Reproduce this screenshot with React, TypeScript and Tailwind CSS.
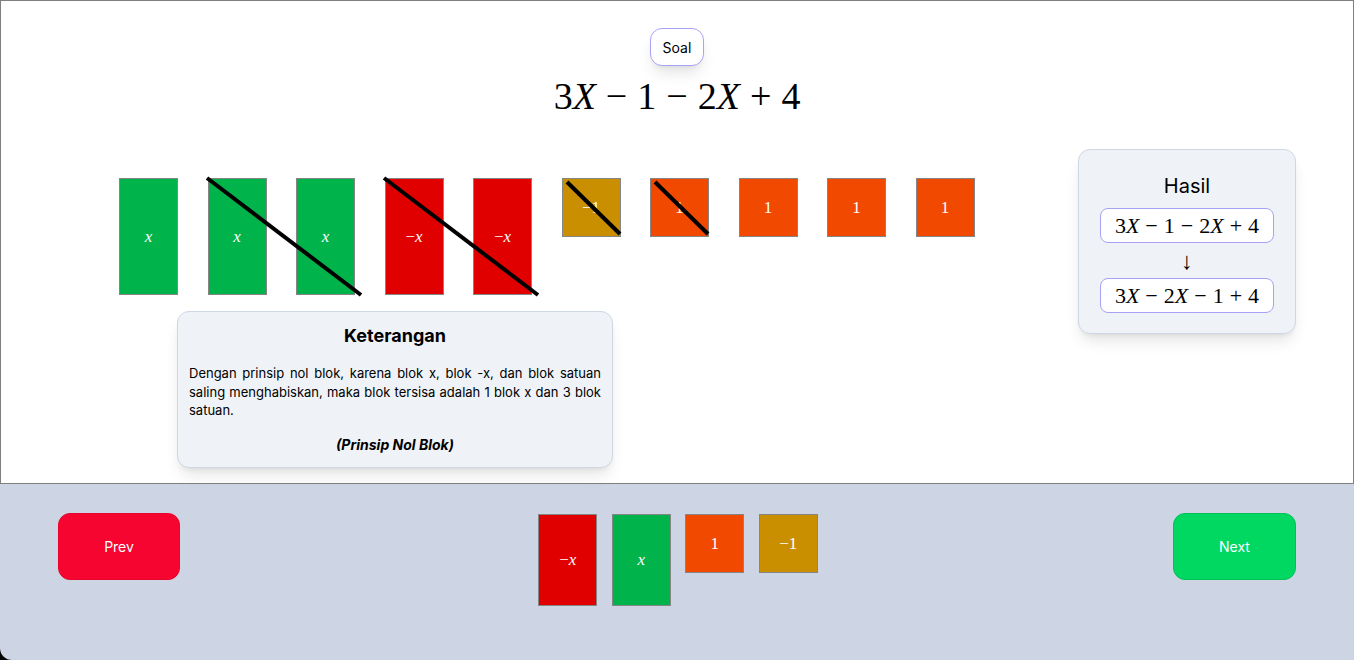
const mathFont = { fontFamily: '"Liberation Serif", "DejaVu Serif", serif' };

type BlockKind = "x" | "-x" | "1" | "-1";

const blockColor: Record<BlockKind, string> = {
  x: "bg-[#00b34b]",
  "-x": "bg-[#e10000]",
  "1": "bg-[#f14a00]",
  "-1": "bg-[#c98f00]",
};

function Label({ kind }: { kind: BlockKind }) {
  if (kind === "x") return <i>x</i>;
  if (kind === "-x")
    return (
      <span>
        −<i>x</i>
      </span>
    );
  if (kind === "-1") return <span>−1</span>;
  return <span>1</span>;
}

function Block({ kind, tall = 117 }: { kind: BlockKind; tall?: number }) {
  const isVar = kind === "x" || kind === "-x";
  return (
    <div
      style={{ ...mathFont, height: isVar ? tall : 59 }}
      className={`flex w-[59px] shrink-0 items-center justify-center border border-[#858585] text-[17px] text-white ${blockColor[kind]}`}
    >
      <Label kind={kind} />
    </div>
  );
}

function Expr({ parts, gap }: { parts: string[]; gap: string }) {
  // parts: alternating terms and operators
  return (
    <span style={mathFont} className="inline-flex items-baseline whitespace-nowrap">
      {parts.map((p, i) => {
        if (p === "−" || p === "+") {
          return (
            <span key={i} className={gap}>
              {p}
            </span>
          );
        }
        const m = p.match(/^(\d*)(X?)$/);
        return (
          <span key={i}>
            {m?.[1]}
            {m?.[2] && <i>X</i>}
          </span>
        );
      })}
    </span>
  );
}

const soal = ["3X", "−", "1", "−", "2X", "+", "4"];
const hasil = ["3X", "−", "2X", "−", "1", "+", "4"];

export default function App() {
  const row: BlockKind[] = ["x", "x", "x", "-x", "-x", "-1", "1", "1", "1", "1"];

  return (
    <div
      className="h-[660px] w-[1354px] overflow-hidden bg-black text-black"
      style={{ fontFamily: 'Inter, "Noto Sans", sans-serif' }}
    >
      <section className="flex h-[484px] flex-col border border-[#7f7f7f] bg-white">
        <div className="mt-[27px] flex justify-center">
          <span className="flex h-[38px] items-center rounded-xl border border-[#a8a2f7] bg-white px-3 text-[14px] shadow-lg">
            Soal
          </span>
        </div>
        <div className="mt-[9px] flex justify-center text-[38px] leading-[42px]">
          <Expr parts={soal} gap="mx-[10px]" />
        </div>

        <div className="mt-[32px] flex items-start">
          <div className="pl-[118px] pt-[29px]">
            <div className="relative flex items-start gap-[29.5px]">
              {row.map((k, i) => (
                <Block key={i} kind={k} />
              ))}
              <svg
                className="pointer-events-none absolute left-0 top-0 overflow-visible"
                width="860"
                height="117"
              >
                <g stroke="black" strokeWidth="4">
                  <line x1="88" y1="0" x2="242" y2="117" />
                  <line x1="265" y1="0" x2="419" y2="117" />
                  <line x1="448" y1="4" x2="501" y2="56" />
                  <line x1="536" y1="4" x2="589" y2="56" />
                </g>
              </svg>
            </div>

            <div className="ml-[58px] mt-[16px] w-[436px] rounded-xl border border-[#cfd6e4] bg-[#eff3f8] px-[11px] pb-[12px] pt-[10px] shadow-lg">
              <h2 className="text-center text-[18px] font-bold leading-[28px]">Keterangan</h2>
              <p className="mt-[14px] text-justify text-[13px] leading-[18.5px]">
                Dengan prinsip nol blok, karena blok x, blok -x, dan blok satuan saling
                menghabiskan, maka blok tersisa adalah 1 blok x dan 3 blok satuan.
              </p>
              <p className="mt-[15px] text-center text-[14px] font-bold italic leading-[20px]">
                (Prinsip Nol Blok)
              </p>
            </div>
          </div>

          <div className="ml-auto mr-[57px] flex w-[218px] flex-col items-center rounded-xl border border-[#cfd6e4] bg-[#eff3f8] pb-[20px] pt-[22px] shadow-lg">
            <h2 className="text-[20px] leading-[28px]">Hasil</h2>
            <div className="mt-[8px] flex h-[35px] w-[174px] items-center justify-center rounded-lg border border-[#a8a2f7] bg-white text-[22px]">
              <Expr parts={soal} gap="mx-[6px]" />
            </div>
            <div className="flex h-[35px] items-center text-[24px] text-black" style={mathFont}>
              ↓
            </div>
            <div className="flex h-[35px] w-[174px] items-center justify-center rounded-lg border border-[#a8a2f7] bg-white text-[22px]">
              <Expr parts={hasil} gap="mx-[6px]" />
            </div>
          </div>
        </div>
      </section>

      <section className="flex h-[176px] items-start justify-between rounded-bl-[12px] bg-[#cdd4e3] px-[58px] pt-[29px]">
        <button className="h-[67px] w-[122px] rounded-xl border border-[#e8042c] bg-[#f5052f] text-[14px] text-white">
          Prev
        </button>
        <div className="ml-[3px] flex items-start gap-[14.5px] pt-px">
          <Block kind="-x" tall={92} />
          <Block kind="x" tall={92} />
          <Block kind="1" />
          <Block kind="-1" />
        </div>
        <button className="h-[67px] w-[123px] rounded-xl border border-[#00c058] bg-[#00d862] text-[14px] text-white">
          Next
        </button>
      </section>
    </div>
  );
}
